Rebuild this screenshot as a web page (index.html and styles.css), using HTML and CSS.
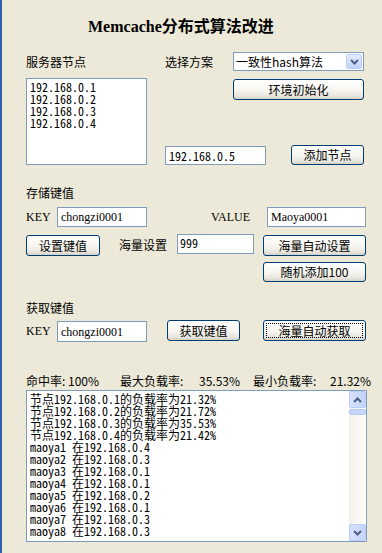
FILE: index.html
```html
<!DOCTYPE html>
<html lang="zh">
<head>
<meta charset="utf-8">
<title>Memcache分布式算法改进</title>
<link rel="stylesheet" href="styles.css">
</head>
<body>
<div class="window">
  <div class="title">Memcache分布式算法改进</div>

  <div class="top">
    <div class="col-left">
      <div class="label-row">服务器节点</div>
      <div class="listbox mono">
        <div>192.168.0.1</div>
        <div>192.168.0.2</div>
        <div>192.168.0.3</div>
        <div>192.168.0.4</div>
      </div>
    </div>
    <div class="col-right">
      <div class="r-scheme">
        <span>选择方案</span>
        <div class="combo">
          <span class="combo-text">一致性hash算法</span>
          <span class="combo-btn"><svg width="9" height="6" viewBox="0 0 9 6"><path d="M1 1 L4.5 4.5 L8 1" fill="none" stroke="#4d6185" stroke-width="2"/></svg></span>
        </div>
      </div>
      <div class="btn btn-init">环境初始化</div>
      <div class="r-add">
        <div class="input in-node mono">192.168.0.5</div>
        <div class="btn btn-add">添加节点</div>
      </div>
    </div>
  </div>

  <div class="section-label s-store">存储键值</div>
  <div class="r-kv">
    <span class="lbl-key serif">KEY</span>
    <div class="input in-key serif">chongzi0001</div>
    <span class="lbl-value serif">VALUE</span>
    <div class="input in-value serif">Maoya0001</div>
  </div>
  <div class="r-set">
    <div class="btn btn-set">设置键值</div>
    <span class="lbl-mass">海量设置</span>
    <div class="input in-mass mono">999</div>
    <div class="btn btn-auto">海量自动设置</div>
  </div>
  <div class="r-rand">
    <div class="btn btn-rand">随机添加100</div>
  </div>

  <div class="section-label s-fetch">获取键值</div>
  <div class="r-fetch">
    <span class="lbl-key serif">KEY</span>
    <div class="input in-key serif">chongzi0001</div>
    <div class="btn btn-get">获取键值</div>
    <div class="btn btn-autoget focused">海量自动获取</div>
  </div>

  <div class="stats">
    <span class="st st1">命中率: 100%</span>
    <span class="st st2">最大负载率:</span>
    <span class="st st3">35.53%</span>
    <span class="st st4">最小负载率:</span>
    <span class="st st5">21.32%</span>
  </div>

  <div class="textarea">
    <div class="ta-text mono">
      <div>节点192.168.0.1的负载率为21.32%</div>
      <div>节点192.168.0.2的负载率为21.72%</div>
      <div>节点192.168.0.3的负载率为35.53%</div>
      <div>节点192.168.0.4的负载率为21.42%</div>
      <div>maoya1 在192.168.0.4</div>
      <div>maoya2 在192.168.0.3</div>
      <div>maoya3 在192.168.0.1</div>
      <div>maoya4 在192.168.0.1</div>
      <div>maoya5 在192.168.0.2</div>
      <div>maoya6 在192.168.0.1</div>
      <div>maoya7 在192.168.0.3</div>
      <div>maoya8 在192.168.0.3</div>
    </div>
    <div class="scrollbar">
      <div class="sb-btn"><svg width="9" height="6" viewBox="0 0 9 6"><path d="M1 5 L4.5 1.5 L8 5" fill="none" stroke="#4d6185" stroke-width="2"/></svg></div>
      <div class="sb-thumb"></div>
      <div class="sb-track"></div>
      <div class="sb-btn"><svg width="9" height="6" viewBox="0 0 9 6"><path d="M1 1 L4.5 4.5 L8 1" fill="none" stroke="#4d6185" stroke-width="2"/></svg></div>
    </div>
  </div>
</div>
</body>
</html>
```

FILE: styles.css
```css
* { box-sizing: border-box; margin: 0; padding: 0; }
html, body { width: 382px; height: 553px; overflow: hidden; }
body {
  background: #ece9d8;
  font-family: "Noto Sans CJK SC", sans-serif;
  font-size: 12px;
  line-height: 14px;
  color: #000;
}
.window {
  height: 553px;
  border-left: 2px solid #2f5fae;
  padding-left: 24px;
  display: flex;
  flex-direction: column;
}
.mono { font-family: "Noto Sans Mono CJK SC", "Liberation Sans", "Noto Sans CJK SC", sans-serif; }
.serif { font-family: "Liberation Serif", "Noto Sans CJK SC", serif; }

.title {
  height: 52px;
  display: flex;
  align-items: center;
  padding-left: 62px;
  padding-top: 2px;
  font-family: "Liberation Serif", "Noto Sans CJK SC", serif;
  font-size: 16px;
  font-weight: bold;
  line-height: 20px;
}

/* top section */
.top { display: flex; height: 113px; gap: 18px; }
.col-left { width: 121px; display: flex; flex-direction: column; }
.label-row { height: 19px; line-height: 19px; }
.listbox {
  margin-top: 7px;
  height: 87px;
  background: #fff;
  border: 1px solid #7f9db9;
  padding: 2px 3px;
  line-height: 12px;
}
.col-right { width: 199px; display: flex; flex-direction: column; }
.r-scheme { height: 19px; display: flex; align-items: center; }
.combo {
  margin-left: auto;
  width: 131px;
  height: 19px;
  border: 1px solid #7f9db9;
  background: #fff;
  display: flex;
  align-items: center;
}
.combo-text { flex: 1; padding-left: 2px; line-height: 15px; }
.combo-btn {
  width: 16px;
  height: 15px;
  margin-right: 1px;
  border: 1px solid #bacdf6;
  border-radius: 2px;
  background: linear-gradient(#e3ebfe, #c3d4fb);
  display: flex;
  align-items: center;
  justify-content: center;
}

/* buttons */
.btn {
  height: 21px;
  border: 1px solid #003c74;
  border-radius: 3px;
  background: linear-gradient(#ffffff 0%, #f6f5f0 55%, #e7e5dc 85%, #d4d0c6 100%);
  display: flex;
  align-items: center;
  justify-content: center;
  line-height: 14px;
  white-space: nowrap;
}
.focused { outline: 1px dotted #000; outline-offset: -4px; }
.btn-init { margin-top: 8px; margin-left: auto; width: 131px; }
.r-add { margin-top: auto; display: flex; align-items: flex-end; }
.btn-add { margin-left: auto; width: 73px; height: 20px; }

/* inputs */
.input {
  height: 20px;
  border: 1px solid #7f9db9;
  background: #fff;
  padding-left: 3px;
  display: flex;
  align-items: center;
  white-space: nowrap;
}
.in-node { width: 101px; height: 19px; }

.section-label { height: 20px; line-height: 20px; }
.s-store { margin-top: 18px; }
.s-fetch { margin-top: 16px; }

.r-kv { margin-top: 4px; height: 20px; display: flex; align-items: center; }
.lbl-key { width: 31px; }
.in-key { width: 90px; }
.lbl-value { margin-left: 64px; width: 56px; }
.in-value { width: 99px; }

.r-set { margin-top: 7px; height: 22px; display: flex; align-items: flex-start; }
.btn-set { margin-top: 1px; width: 74px; }
.lbl-mass { margin-left: 19px; width: 58px; line-height: 22px; }
.in-mass { width: 77px; align-items: flex-start; padding-top: 1px; padding-left: 2px; }
.btn-auto { margin-left: 9px; margin-top: 1px; width: 103px; }

.r-rand { margin-top: 6px; display: flex; }
.btn-rand { margin-left: 237px; width: 103px; height: 20px; }

.r-fetch { margin-top: 2px; height: 22px; display: flex; align-items: flex-start; }
.r-fetch .lbl-key { line-height: 22px; }
.r-fetch .in-key { margin-top: 1px; height: 21px; }
.btn-get { margin-left: 20px; width: 73px; }
.btn-autoget { margin-left: 23px; width: 103px; }

/* stats */
.stats { margin-top: 30px; height: 18px; line-height: 18px; display: flex; white-space: nowrap; }
.st1 { width: 94px; }
.st2 { width: 79px; }
.st3 { width: 54px; }
.st4 { width: 77px; }

/* textarea */
.textarea {
  width: 341px;
  height: 152px;
  border: 1px solid #7f9db9;
  background: #fff;
  display: flex;
}
.ta-text {
  flex: 1;
  padding: 2px 3px 0;
  line-height: 12px;
  white-space: nowrap;
}
.scrollbar {
  width: 17px;
  display: flex;
  flex-direction: column;
  background: linear-gradient(90deg, #f3f1ea, #fdfdfa);
}
.sb-btn {
  height: 17px;
  border: 1px solid #bacdf6;
  border-radius: 2px;
  background: linear-gradient(90deg, #d7e2fc, #c3d3fb);
  display: flex;
  align-items: center;
  justify-content: center;
}
.sb-thumb {
  height: 6px;
  margin-top: 1px;
  border: 1px solid #b5c8f3;
  border-radius: 2px;
  background: #c8d7fb;
}
.sb-track { flex: 1; }
```
